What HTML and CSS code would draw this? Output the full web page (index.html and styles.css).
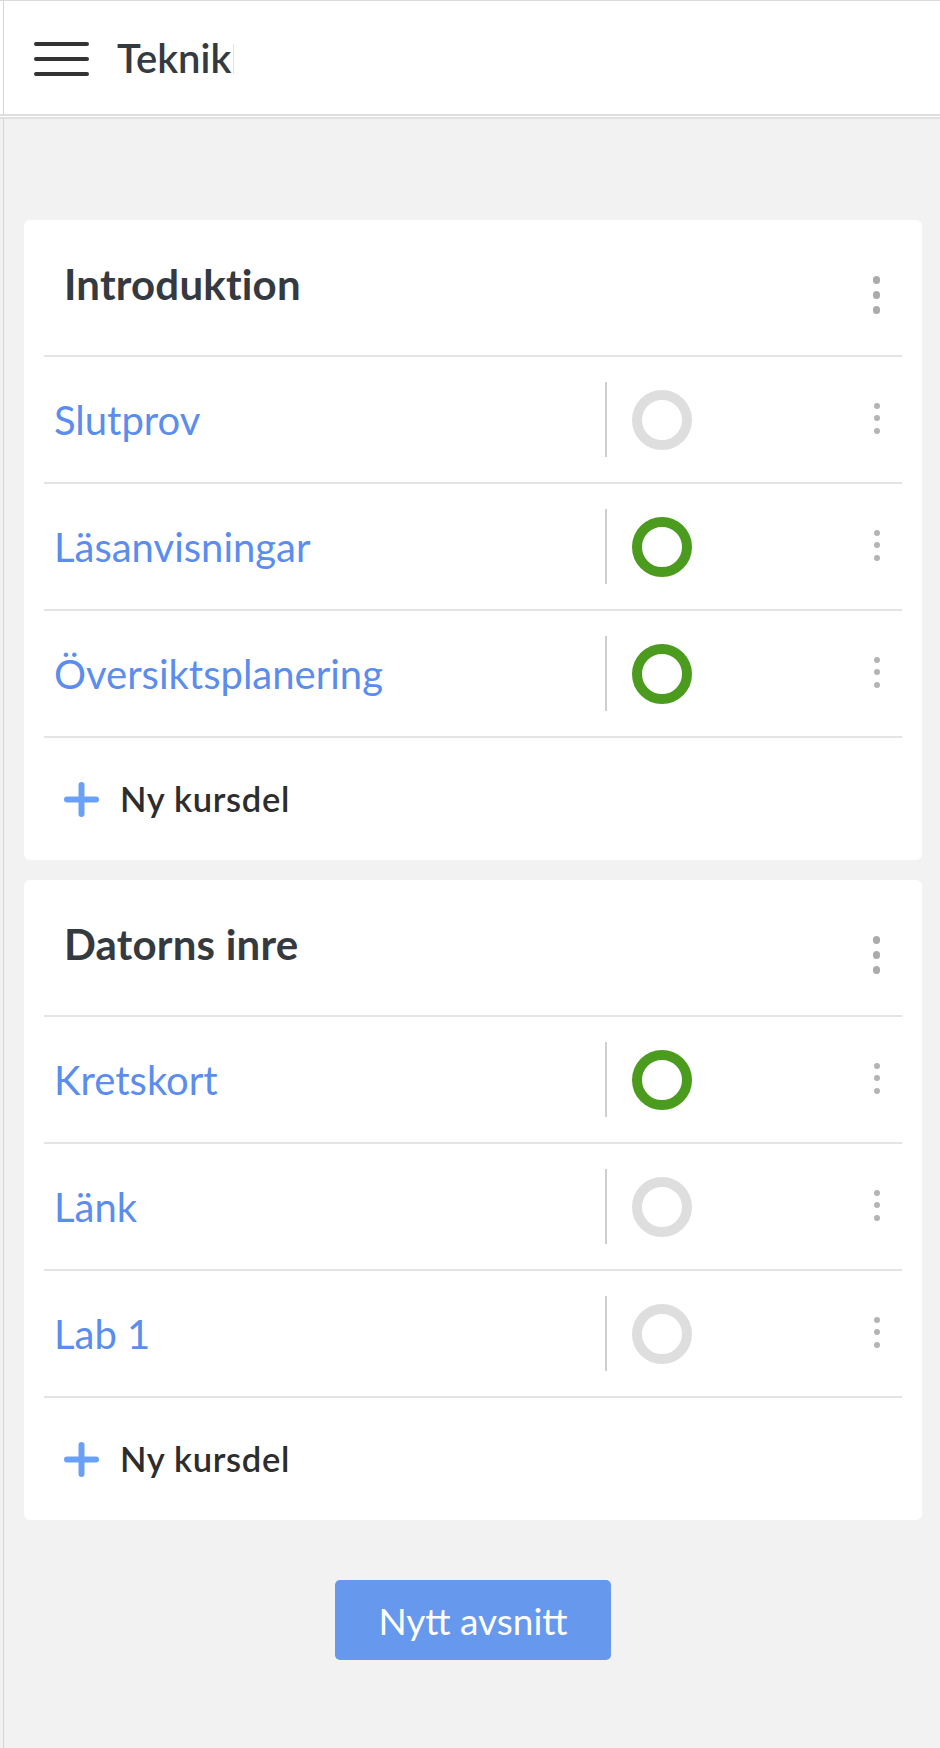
FILE: index.html
```html
<!DOCTYPE html>
<html lang="sv">
<head>
<meta charset="utf-8">
<title>Teknik</title>
<link rel="stylesheet" href="styles.css">
</head>
<body>
<header class="topbar">
  <button class="menu-btn" aria-label="Meny">
    <svg width="55" height="34" viewBox="0 0 55 34"><path d="M2 2H53M2 17H53M2 32H53" stroke="#333" stroke-width="4" stroke-linecap="round" fill="none"/></svg>
  </button>
  <h1 class="app-title">Teknik<span class="caret"></span></h1>
</header>
<main class="content">
  <section class="card">
    <div class="card-head">
      <h2 class="card-title">Introduktion</h2>
      <span class="kebab kebab-lg"><i></i><i></i><i></i></span>
    </div>
    <ul class="items">
      <li class="item">
        <a class="item-title" href="#">Slutprov</a>
        <div class="item-side"><span class="vsep"></span><span class="status"></span><span class="kebab"><i></i><i></i><i></i></span></div>
      </li>
      <li class="item">
        <a class="item-title" href="#">Läsanvisningar</a>
        <div class="item-side"><span class="vsep"></span><span class="status done"></span><span class="kebab"><i></i><i></i><i></i></span></div>
      </li>
      <li class="item">
        <a class="item-title" href="#">Översiktsplanering</a>
        <div class="item-side"><span class="vsep"></span><span class="status done"></span><span class="kebab"><i></i><i></i><i></i></span></div>
      </li>
    </ul>
    <div class="add-row">
      <svg width="35" height="35" viewBox="0 0 35 35"><path d="M17.5 3V32M3 17.5H32" stroke="#6aa1f8" stroke-width="6" stroke-linecap="round" fill="none"/></svg>
      <span class="add-label">Ny kursdel</span>
    </div>
  </section>
  <section class="card">
    <div class="card-head">
      <h2 class="card-title">Datorns inre</h2>
      <span class="kebab kebab-lg"><i></i><i></i><i></i></span>
    </div>
    <ul class="items">
      <li class="item">
        <a class="item-title" href="#">Kretskort</a>
        <div class="item-side"><span class="vsep"></span><span class="status done"></span><span class="kebab"><i></i><i></i><i></i></span></div>
      </li>
      <li class="item">
        <a class="item-title" href="#">Länk</a>
        <div class="item-side"><span class="vsep"></span><span class="status"></span><span class="kebab"><i></i><i></i><i></i></span></div>
      </li>
      <li class="item">
        <a class="item-title" href="#">Lab 1</a>
        <div class="item-side"><span class="vsep"></span><span class="status"></span><span class="kebab"><i></i><i></i><i></i></span></div>
      </li>
    </ul>
    <div class="add-row">
      <svg width="35" height="35" viewBox="0 0 35 35"><path d="M17.5 3V32M3 17.5H32" stroke="#6aa1f8" stroke-width="6" stroke-linecap="round" fill="none"/></svg>
      <span class="add-label">Ny kursdel</span>
    </div>
  </section>
  <div class="actions">
    <button class="btn-primary">Nytt avsnitt</button>
  </div>
</main>
</body>
</html>
```
FILE: styles.css
```css
html, body {
  margin: 0;
  padding: 0;
}

body {
  min-height: 1748px;
  background: linear-gradient(90deg, #f2f2f2 3px, #d6d6d6 3px, #d6d6d6 4px, #f2f2f2 4px);
  font-family: Lato, "Open Sans", sans-serif;
}

.topbar {
  height: 113px;
  border-top: 1px solid #d9d9d9;
  border-bottom: 2px solid #dedede;
  box-shadow: 0 1px 0 #fff, 0 3px 0 #e0e0e0;
  background: linear-gradient(90deg, #fff 3px, #d6d6d6 3px, #d6d6d6 4px, #fff 4px);
  display: flex;
  align-items: center;
  padding-left: 34px;
}

.menu-btn {
  border: 0;
  padding: 0;
  margin: 3px 0 0;
  background: none;
  display: flex;
}

.app-title {
  margin: 0 0 0 28px;
  font-size: 40px;
  line-height: 1.2;
  font-weight: 600;
  color: #343a40;
  display: flex;
  align-items: center;
}

.caret {
  display: inline-block;
  width: 1px;
  height: 30px;
  margin-left: 2px;
  margin-top: 2px;
  background: #f7e3ad;
}

.content {
  padding: 104px 18px 0 24px;
}

.card {
  background: #fff;
  border-radius: 6px;
  padding: 0 20px;
  margin-bottom: 20px;
}

.card-head {
  height: 135px;
  display: flex;
  align-items: center;
  justify-content: space-between;
  border-bottom: 2px solid #e4e4e4;
  padding: 0 22px 0 20px;
}

.card-title {
  margin: 0 0 6px;
  font-size: 42px;
  letter-spacing: 0.2px;
  line-height: 1.2;
  font-weight: 700;
  color: #343a40;
}

.kebab {
  display: flex;
  flex-direction: column;
  gap: 6.5px;
}

.kebab i {
  display: block;
  width: 6px;
  height: 6px;
  border-radius: 50%;
  background: #b4b4b4;
}

.kebab-lg {
  gap: 7.5px;
  margin-top: 15px;
}

.kebab-lg i {
  width: 7.5px;
  height: 7.5px;
  background: #ababab;
}

.items {
  list-style: none;
  margin: 0;
  padding: 0;
}

.item {
  height: 125px;
  display: flex;
  align-items: center;
  border-bottom: 2px solid #e4e4e4;
  padding: 0 22px 0 10px;
}

.item-title {
  flex: 1;
  font-size: 40px;
  line-height: 1.2;
  color: #5a8dee;
  text-decoration: none;
}

.item-side {
  width: 275px;
  display: flex;
  align-items: center;
}

.vsep {
  width: 2px;
  height: 75px;
  background: #cfcfcf;
}

.status {
  width: 60px;
  height: 60px;
  box-sizing: border-box;
  border: 10px solid #dedede;
  border-radius: 50%;
  margin-left: 25px;
}

.status.done {
  border-color: #4b9b1f;
}

.item .kebab {
  margin-left: auto;
  margin-bottom: 3px;
}

.add-row {
  height: 122px;
  display: flex;
  align-items: center;
  padding-left: 20px;
}

.add-label {
  margin-left: 21px;
  font-size: 34.5px;
  letter-spacing: 0.7px;
  line-height: 1.2;
  font-weight: 600;
  color: #2d2d2d;
}

.actions {
  display: flex;
  justify-content: center;
  padding-top: 40px;
}

.btn-primary {
  width: 276px;
  height: 80px;
  border: 0;
  border-radius: 5px;
  background: #6699ee;
  color: #fff;
  font-family: Lato, "Open Sans", sans-serif;
  font-size: 37px;
  font-weight: 400;
  padding: 0;
}
```
